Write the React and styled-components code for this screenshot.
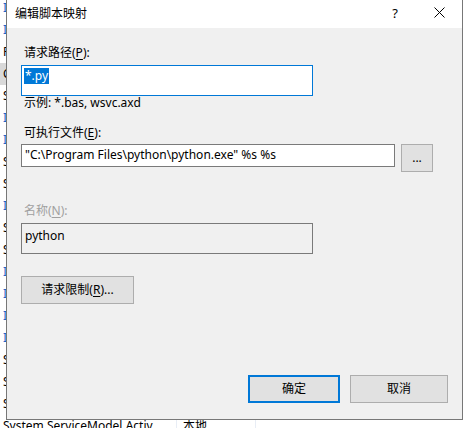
import React from "react";
import styled, { createGlobalStyle } from "styled-components";

const FONT = '"Segoe UI", "Noto Sans", "Noto Sans CJK SC", sans-serif';

const Global = createGlobalStyle`
  html, body { margin: 0; padding: 0; background: #ffffff; }
  body { width: 469px; height: 428px; overflow: hidden; font-family: ${FONT}; font-size: 12px; color: #000; }
  #root { position: relative; width: 469px; height: 428px; overflow: hidden; }
`;

const BgList = styled.div`
  display: flex;
  flex-direction: column;
  margin-top: -3px;
`;

const BgRow = styled.div`
  display: flex;
  height: 22px;
  align-items: center;
`;

const BgCell = styled.div`
  width: ${(p) => p.$w}px;
  padding-left: ${(p) => p.$pl}px;
  box-sizing: border-box;
  height: 22px;
  line-height: 22px;
  white-space: nowrap;
  overflow: hidden;
  background: ${(p) => (p.$selected ? "#d9d9d9" : "transparent")};
  color: ${(p) => (p.$blue ? "#1e64c8" : "#000")};
  border-right: ${(p) => (p.$sep ? "1px solid #e8edf5" : "none")};
`;

const Dialog = styled.div`
  position: absolute;
  left: 6px;
  top: 0;
  width: 457px;
  height: 420px;
  box-sizing: border-box;
  border: 1px solid #777777;
  border-top: none;
  background: #f0f0f0;
  display: flex;
  flex-direction: column;
`;

const TitleBar = styled.div`
  height: 28px;
  background: #ffffff;
  display: flex;
  align-items: center;
`;

const Title = styled.div`
  flex: 1;
  padding-left: 8px;
  padding-bottom: 2px;
  font-size: 12px;
`;

const CaptionBtn = styled.div`
  width: ${(p) => p.$w}px;
  height: 28px;
  display: flex;
  align-items: center;
  justify-content: center;
  font-size: 13px;
  padding-bottom: 3px;
  box-sizing: border-box;
`;

const Panel = styled.div`
  flex: 1;
  display: flex;
  flex-direction: column;
  padding: 0 14px 16px 14px;
`;

const Label = styled.div`
  line-height: 16px;
  height: 16px;
  padding-left: 3px;
  margin-top: ${(p) => p.$mt}px;
  color: ${(p) => (p.$disabled ? "#a0a0a0" : "#000")};
  white-space: nowrap;
`;

const Hint = styled.div`
  line-height: 12px;
  height: 12px;
  padding-left: 3px;
  margin-top: 1px;
  white-space: nowrap;
`;

const U = styled.span`
  text-decoration: underline;
  text-underline-offset: 2px;
`;

const Field = styled.div`
  width: ${(p) => p.$w}px;
  height: ${(p) => p.$h}px;
  margin-top: ${(p) => p.$mt || 0}px;
  box-sizing: border-box;
  border: 1px solid ${(p) => (p.$focus ? "#0078d7" : "#7a7a7a")};
  background: ${(p) => (p.$disabled ? "#f0f0f0" : "#ffffff")};
  padding: ${(p) => p.$pt}px 0 0 3px;
  line-height: 16px;
  white-space: nowrap;
  overflow: hidden;
`;

const Selected = styled.span`
  background: #0078d7;
  color: #ffffff;
  display: inline-block;
  padding: 0 1px 0 1px;
  margin-left: -1px;
  line-height: 16px;
`;

const Row = styled.div`
  display: flex;
  gap: 6px;
  margin-top: 3px;
  align-items: flex-start;
`;

const Button = styled.div`
  width: ${(p) => p.$w}px;
  height: 28px;
  margin-top: ${(p) => p.$mt || 0}px;
  box-sizing: border-box;
  border: ${(p) => (p.$default ? "2px solid #0078d7" : "1px solid #adadad")};
  background: #e1e1e1;
  display: flex;
  align-items: center;
  justify-content: center;
  white-space: nowrap;
  padding-bottom: 2px;
`;

const Spacer = styled.div`
  flex: 1;
`;

const Footer = styled.div`
  display: flex;
  justify-content: flex-end;
  gap: 10px;
`;

const rows = [
  ["I", true], ["I", true], ["P"], ["C", false, true], ["S"], ["I", true], ["I", true],
  ["S"], ["S"], ["I", true], ["S"], ["S"], ["I", true], ["I", true], ["I", true],
  ["I", true], ["S"], ["S"], ["S"],
];

export default function App() {
  return (
    <>
      <Global />
      <BgList>
        {rows.map(([t, blue, sel], i) => (
          <BgRow key={i}>
            <BgCell $w={176} $pl={3} $blue={blue} $selected={sel}>{t}</BgCell>
          </BgRow>
        ))}
        <BgRow>
          <BgCell $w={177} $pl={3} $sep>System.ServiceModel.Activ</BgCell>
          <BgCell $w={79} $pl={6} $sep>本地</BgCell>
          <BgCell $w={200} $pl={6}></BgCell>
        </BgRow>
      </BgList>

      <Dialog>
        <TitleBar>
          <Title>编辑脚本映射</Title>
          <CaptionBtn $w={42}>?</CaptionBtn>
          <CaptionBtn $w={46}>
            <svg width="11" height="11" viewBox="0 0 11 11">
              <path d="M0.5 0.5 L10.5 10.5 M10.5 0.5 L0.5 10.5" stroke="#000" strokeWidth="1" fill="none" />
            </svg>
          </CaptionBtn>
        </TitleBar>
        <Panel>
          <Label $mt={17}>请求路径(<U>P</U>):</Label>
          <Field $w={292} $h={31} $mt={4} $focus $pt={2}>
            <Selected>*.py</Selected>
          </Field>
          <Hint>示例: *.bas, wsvc.axd</Hint>
          <Label $mt={16}>可执行文件(<U>E</U>):</Label>
          <Row>
            <Field $w={374} $h={23} $pt={2}>
              {'"C:\\Program Files\\python\\python.exe" %s %s'}
            </Field>
            <Button $w={32}>...</Button>
          </Row>
          <Label $mt={31} $disabled>名称(<U>N</U>):</Label>
          <Field $w={292} $h={31} $mt={4} $disabled $pt={4}>python</Field>
          <Button $w={113} $mt={22}>请求限制(<U>R</U>)...</Button>
          <Spacer />
          <Footer>
            <Button $w={92} $default>确定</Button>
            <Button $w={98}>取消</Button>
          </Footer>
        </Panel>
      </Dialog>
    </>
  );
}
